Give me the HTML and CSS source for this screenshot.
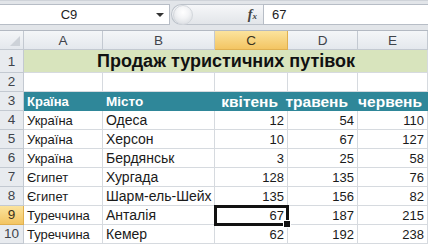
FILE: index.html
```html
<!DOCTYPE html>
<html>
<head>
<meta charset="utf-8">
<link rel="stylesheet" href="styles.css">
</head>
<body>
<div class="app">
  <div class="fbar">
    <div class="namebox"><span class="nb-text">C9</span><span class="nb-arrow"></span></div>
    <div class="pill"><span class="pill-knob"></span><span class="fx"><i>f</i><small>x</small></span></div>
    <div class="formula">67</div>
  </div>
  <div class="sheet">
    <div class="corner"><span class="tri"></span></div>
    <div class="ch">A</div><div class="ch">B</div><div class="ch sel">C</div><div class="ch">D</div><div class="ch">E</div>

    <div class="rh r1">1</div>
    <div class="title">Продаж туристичних путівок</div>

    <div class="rh">2</div>
    <div class="c"></div><div class="c"></div><div class="c"></div><div class="c"></div><div class="c"></div>

    <div class="rh">3</div>
    <div class="c hd">Країна</div><div class="c hd city">Місто</div><div class="c hd mh">квітень</div><div class="c hd mh">травень</div><div class="c hd mh last">червень</div>

    <div class="rh">4</div>
    <div class="c">Україна</div><div class="c city">Одеса</div><div class="c n">12</div><div class="c n">54</div><div class="c n">110</div>

    <div class="rh">5</div>
    <div class="c">Україна</div><div class="c city">Херсон</div><div class="c n">10</div><div class="c n">67</div><div class="c n">127</div>

    <div class="rh">6</div>
    <div class="c">Україна</div><div class="c city">Бердянськ</div><div class="c n">3</div><div class="c n">25</div><div class="c n">58</div>

    <div class="rh">7</div>
    <div class="c">Єгипет</div><div class="c city">Хургада</div><div class="c n">128</div><div class="c n">135</div><div class="c n">76</div>

    <div class="rh">8</div>
    <div class="c">Єгипет</div><div class="c city">Шарм-ель-Шейх</div><div class="c n">135</div><div class="c n">156</div><div class="c n">82</div>

    <div class="rh sel">9</div>
    <div class="c">Туреччина</div><div class="c city">Анталія</div><div class="c n active">67<span class="handle"></span></div><div class="c n">187</div><div class="c n">215</div>

    <div class="rh">10</div>
    <div class="c">Туреччина</div><div class="c city">Кемер</div><div class="c n">62</div><div class="c n">192</div><div class="c n">238</div>
  </div>
</div>
</body>
</html>
```
FILE: styles.css
```css
html, body {
  margin: 0;
  padding: 0;
  background: #fff;
}
.app {
  width: 428px;
  height: 244px;
  overflow: hidden;
  font-family: "Liberation Sans", Arial, sans-serif;
  font-size: 13px;
  color: #1a1a1a;
  background: #e2e5e9;
}
.fbar {
  height: 30px;
  box-sizing: border-box;
  padding: 3px 0 5px 0;
  display: flex;
  align-items: stretch;
  border-top: 1px solid #cfd3d9;
}
.namebox {
  width: 170px;
  box-sizing: border-box;
  background: #fff;
  border: 1px solid #b7bdc6;
  border-left: none;
  display: flex;
  align-items: center;
}
.nb-text {
  flex: 1;
  text-align: center;
  font-size: 13px;
  color: #222;
  padding-right: 18px;
}
.nb-arrow {
  width: 0;
  height: 0;
  border-left: 4px solid transparent;
  border-right: 4px solid transparent;
  border-top: 4px solid #333;
  margin-right: 5px;
}
.pill {
  width: 92px;
  box-sizing: border-box;
  margin-left: 1px;
  border: 1px solid #bcc2ca;
  border-right: none;
  border-radius: 11px 0 0 11px;
  background: linear-gradient(#f6f7f9, #e2e5e9);
  display: flex;
  align-items: center;
  justify-content: space-between;
  padding: 0 6px 0 1px;
}
.pill-knob {
  width: 18px;
  height: 18px;
  border-radius: 50%;
  background: radial-gradient(circle at 50% 35%, #ffffff 0, #f3f4f6 40%, #d3d7dc 100%);
  border: 1px solid #d3d7dc;
}
.fx {
  font-family: "Liberation Serif", serif;
  color: #444;
  font-size: 14px;
  font-weight: bold;
}
.fx i { font-style: italic; }
.fx small { font-size: 9px; font-style: italic; }
.formula {
  flex: 1;
  background: #fff;
  border: 1px solid #b7bdc6;
  border-right: none;
  padding-left: 8px;
  display: flex;
  align-items: center;
  color: #222;
}
.sheet {
  display: grid;
  grid-template-columns: 24px 79px 112px 73px 70px 70px;
  grid-template-rows: 19px 23px repeat(9, 19px);
  background: #fff;
  border-top: 1px solid #b3b9c2;
}
.sheet > div {
  box-sizing: border-box;
  border-right: 1px solid #d6dadf;
  border-bottom: 1px solid #d6dadf;
  white-space: nowrap;
  overflow: hidden;
}
.corner, .ch, .rh {
  background: linear-gradient(#f4f6f8, #e4e8ed);
  color: #3f444b;
  border-color: #c3c9d1 !important;
}
.corner {
  position: relative;
}
.tri {
  position: absolute;
  right: 3px;
  bottom: 3px;
  width: 0;
  height: 0;
  border-left: 10px solid transparent;
  border-bottom: 10px solid #cdd2d8;
}
.ch {
  text-align: center;
  line-height: 19px;
  font-size: 13.5px;
}
.rh {
  text-align: center;
  line-height: 18px;
  font-size: 13.5px;
  background: #e8ebef;
}
.rh.r1 { line-height: 24px; }
.ch.sel, .rh.sel {
  background: linear-gradient(#fbe39d, #f3c563);
  color: #3a3220;
  border-color: #e0b050 !important;
}
.title {
  grid-column: 2 / span 5;
  background: #d8e4bd;
  font-weight: bold;
  font-size: 18px;
  line-height: 23px;
  padding-left: 73px;
  color: #111;
}
.c {
  padding: 0 3px;
  line-height: 19px;
}
.c.city {
  font-size: 14px;
}
.n { text-align: right; }
.hd {
  background: #2f8799;
  color: #fff;
  font-weight: bold;
  border-color: #2f8799 !important;
  padding: 0 2px 0 3px;
}
.hd.city { font-size: 13.5px; }
.hd.mh {
  font-size: 15.5px;
  display: flex;
  justify-content: flex-end;
  overflow: visible;
  padding-right: 9px;
}
.hd.mh.last {
  padding-right: 5px;
}
.active {
  position: relative;
  overflow: visible !important;
  outline: 3px solid #111;
  outline-offset: -2px;
  z-index: 2;
}
.handle {
  position: absolute;
  right: -4px;
  bottom: -4px;
  width: 6px;
  height: 6px;
  background: #111;
  border: 1px solid #fff;
}
```
